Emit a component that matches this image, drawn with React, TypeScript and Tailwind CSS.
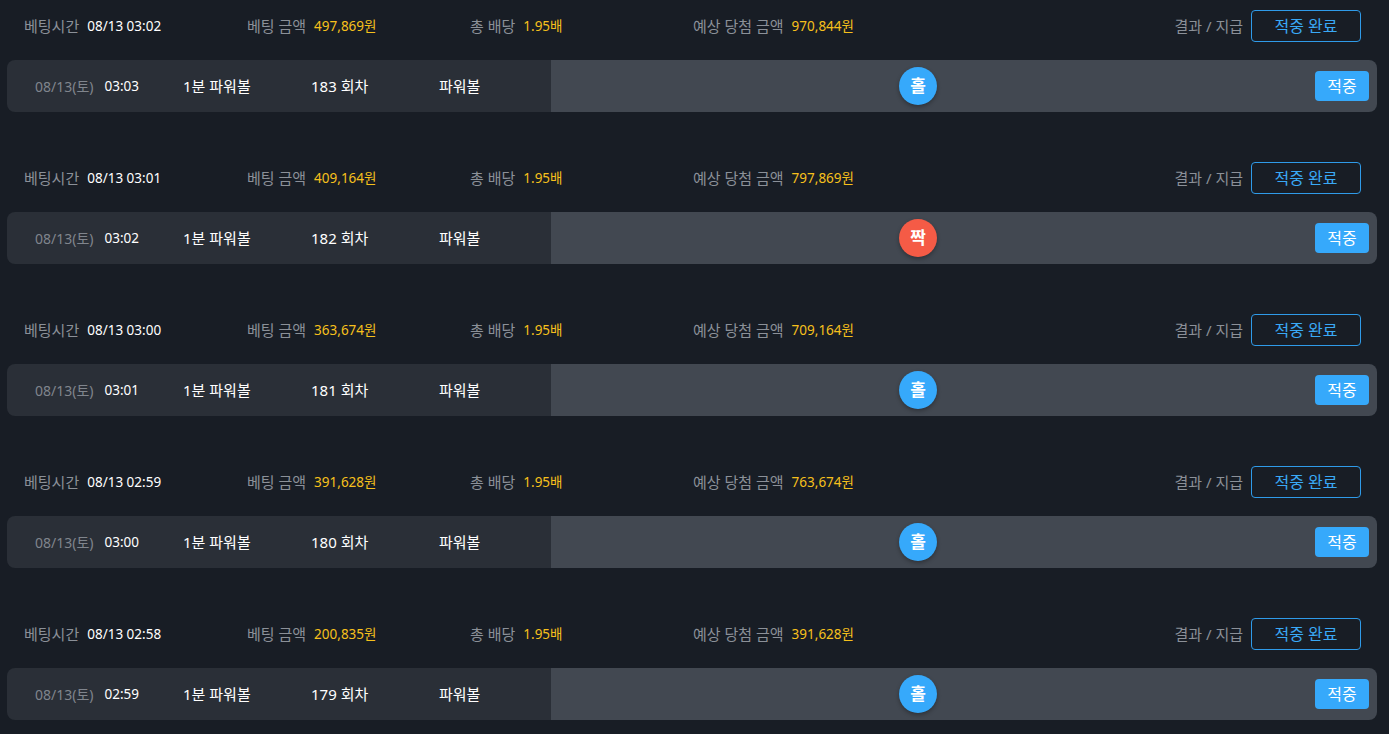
import React from "react";

type Item = {
  betTime: string;
  amount: string;
  win: string;
  date: string;
  time: string;
  round: string;
  result: "홀" | "짝";
};

const items: Item[] = [
  { betTime: "08/13 03:02", amount: "497,869원", win: "970,844원", date: "08/13(토)", time: "03:03", round: "183 회차", result: "홀" },
  { betTime: "08/13 03:01", amount: "409,164원", win: "797,869원", date: "08/13(토)", time: "03:02", round: "182 회차", result: "짝" },
  { betTime: "08/13 03:00", amount: "363,674원", win: "709,164원", date: "08/13(토)", time: "03:01", round: "181 회차", result: "홀" },
  { betTime: "08/13 02:59", amount: "391,628원", win: "763,674원", date: "08/13(토)", time: "03:00", round: "180 회차", result: "홀" },
  { betTime: "08/13 02:58", amount: "200,835원", win: "391,628원", date: "08/13(토)", time: "02:59", round: "179 회차", result: "홀" },
];

function Block({ it }: { it: Item }) {
  return (
    <div className="mb-[40px]">
      <div className="h-[52px] flex items-center pl-[24px] pr-[28px]">
        <div className="w-[223px] flex items-center gap-[8px]">
          <span className="text-[15px] text-[#8b9098]">베팅시간</span>
          <span className="text-[13.5px] text-white">{it.betTime}</span>
        </div>
        <div className="w-[223px] flex items-center gap-[8px]">
          <span className="text-[15px] text-[#8b9098]">베팅 금액</span>
          <span className="text-[13.5px] text-[#f6c01c]">{it.amount}</span>
        </div>
        <div className="w-[223px] flex items-center gap-[8px]">
          <span className="text-[15px] text-[#8b9098]">총 배당</span>
          <span className="text-[13.5px] text-[#f6c01c]">1.95배</span>
        </div>
        <div className="flex items-center gap-[8px]">
          <span className="text-[15px] text-[#8b9098]">예상 당첨 금액</span>
          <span className="text-[13.5px] text-[#f6c01c]">{it.win}</span>
        </div>
        <div className="ml-auto flex items-center gap-[8px]">
          <span className="text-[15px] text-[#8b9098]">결과 / 지급</span>
          <div className="w-[110px] h-[32px] border border-[#2f9be9] rounded-[4px] flex items-center justify-center text-[16px] text-[#3aa9f6]">
            적중 완료
          </div>
        </div>
      </div>
      <div className="mt-[8px] ml-[7px] mr-[12px] h-[52px] flex rounded-[8px] overflow-hidden">
        <div className="w-[544px] bg-[#2a2f37] flex items-center pl-[28px] text-[15px]">
          <div className="w-[148px] flex items-center gap-[11px]">
            <span className="text-[#80858d] text-[14px]">{it.date}</span>
            <span className="text-white text-[13.5px]">{it.time}</span>
          </div>
          <div className="w-[128px] text-white">1분 파워볼</div>
          <div className="w-[128px] text-white">{it.round}</div>
          <div className="text-white">파워볼</div>
        </div>
        <div className="flex-1 bg-[#424851] flex items-center pr-[8px]">
          <div className="flex-1 flex justify-center mr-[30px]">
            <div
              className={`w-[38px] h-[38px] rounded-full flex items-center justify-center text-white font-bold text-[17px] shadow-[0_2px_4px_rgba(0,0,0,0.3)] ${
                it.result === "홀" ? "bg-[#36a9fb]" : "bg-[#f55b46]"
              }`}
            >
              {it.result}
            </div>
          </div>
          <div className="w-[54px] h-[30px] rounded-[4px] bg-[#36a9fb] text-white text-[16px] flex items-center justify-center">
            적중
          </div>
        </div>
      </div>
    </div>
  );
}

export default function App() {
  return (
    <div
      className="w-[1389px] h-[734px] overflow-hidden bg-[#181d25]"
      style={{ fontFamily: '"Noto Sans", "Noto Sans CJK KR", sans-serif' }}
    >
      {items.map((it, i) => (
        <Block key={i} it={it} />
      ))}
    </div>
  );
}
